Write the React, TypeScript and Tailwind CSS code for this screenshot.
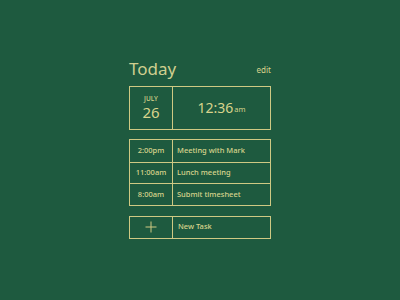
import React from 'react';

const tasks = [
  { time: '2:00pm', title: 'Meeting with Mark' },
  { time: '11:00am', title: 'Lunch meeting' },
  { time: '8:00am', title: 'Submit timesheet' },
];

export default function App() {
  return (
    <div
      className="w-[400px] h-[300px] bg-[#1e5a3f] flex justify-center text-[#d8d48c]"
      style={{ fontFamily: '"Noto Sans", "Open Sans", sans-serif' }}
    >
      <div className="w-[142px] pt-[55px]">
        <div className="flex items-end justify-between h-[22px]">
          <span className="text-[17px] leading-none text-[#cfcf8f]">Today</span>
          <span className="text-[8px] leading-none mb-[3px]">edit</span>
        </div>

        <div className="mt-[9px] h-[44px] flex border-[1.5px] border-[#cfc983]">
          <div className="w-[43px] border-r border-[#cfc983] flex flex-col items-center justify-center">
            <span className="text-[6.5px] leading-[8px] font-medium">JULY</span>
            <span className="text-[15px] leading-[18px]">26</span>
          </div>
          <div className="flex-1 flex items-center justify-center">
            <span className="text-[14px] leading-none">12:36</span>
            <span className="text-[7.5px] leading-none mt-[4px] ml-[1px]">am</span>
          </div>
        </div>

        <div className="mt-[9px] border-[1.5px] border-[#cfc983]">
          {tasks.map((t, i) => (
            <div
              key={t.time}
              className={`flex h-[21.5px] text-[7.5px] font-medium ${i > 0 ? 'border-t border-[#cfc983]' : ''}`}
            >
              <div className="w-[43px] border-r border-[#cfc983] flex items-center justify-center">
                {t.time}
              </div>
              <div className="flex-1 flex items-center pl-[4px]">{t.title}</div>
            </div>
          ))}
        </div>

        <div className="mt-[10px] h-[23px] flex border-[1.5px] border-[#cfc983]">
          <div className="w-[43px] border-r border-[#cfc983] flex items-center justify-center">
            <svg width="12" height="12" viewBox="0 0 12 12" stroke="#cfc983" strokeWidth="1">
              <path d="M6 0.5v11M0.5 6h11" />
            </svg>
          </div>
          <div className="flex-1 flex items-center pl-[5px] text-[7.5px] font-medium">New Task</div>
        </div>
      </div>
    </div>
  );
}
